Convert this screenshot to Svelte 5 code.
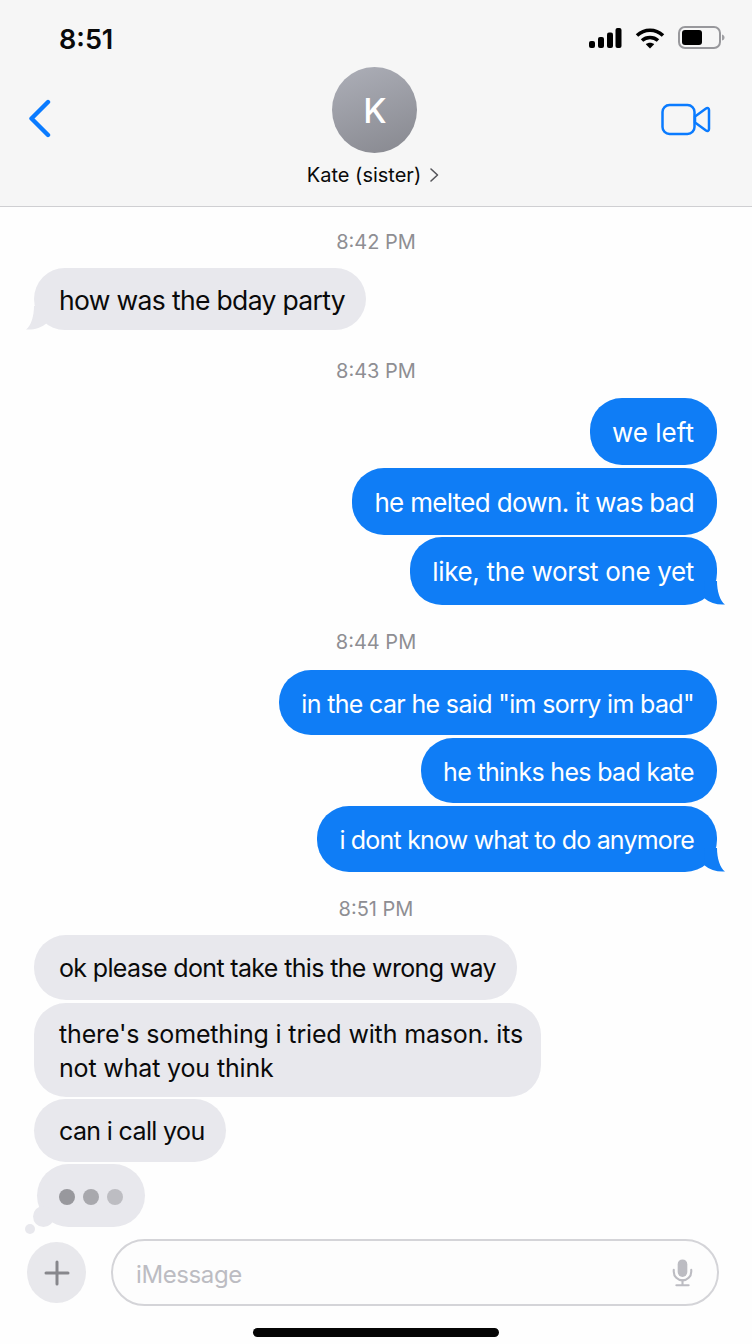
<script>
  const items = [
    { t: 'time', text: '8:42 PM', gap: 23 },
    { t: 'in', text: 'how was the bday party', gap: 14, h: 62, tail: true, size: 26.5, ls: -0.66 },
    { t: 'time', text: '8:43 PM', gap: 29 },
    { t: 'out', text: 'we left', gap: 15, h: 67, size: 26, ls: 0 },
    { t: 'out', text: 'he melted down. it was bad', gap: 3, h: 67, size: 26, ls: -0.68 },
    { t: 'out', text: 'like, the worst one yet', gap: 2, h: 68, tail: true, size: 26, ls: -0.34 },
    { t: 'time', text: '8:44 PM', gap: 25 },
    { t: 'out', text: 'in the car he said "im sorry im bad"', gap: 16, h: 65, size: 25, ls: -0.66 },
    { t: 'out', text: 'he thinks hes bad kate', gap: 3, h: 65, size: 25, ls: -0.68 },
    { t: 'out', text: 'i dont know what to do anymore', gap: 3, h: 66, tail: true, size: 25, ls: -0.8 },
    { t: 'time', text: '8:51 PM', gap: 25 },
    { t: 'in', text: 'ok please dont take this the wrong way', gap: 14, h: 65, size: 25, ls: -0.65 },
    { t: 'in', text: "there's something i tried with mason. its\nnot what you think", gap: 3, h: 94, size: 25, ls: -0.15, tight: true },
    { t: 'in', text: 'can i call you', gap: 2, h: 63, size: 25, ls: -0.64 }
  ];
</script>

<div class="phone">
  <header class="top">
    <div class="status">
      <span class="clock">8:51</span>
      <div class="status-icons">
        <svg width="33" height="22" viewBox="0 0 33 22" fill="#000">
          <rect x="0" y="14" width="6" height="7" rx="2" />
          <rect x="9" y="10" width="6" height="11" rx="2" />
          <rect x="18" y="5.500" width="6" height="15.500" rx="2" />
          <rect x="26.500" y="1" width="6" height="20" rx="2" />
        </svg>
        <svg width="30" height="22" viewBox="0 0 30 22" fill="none" stroke="#000" stroke-width="3.600">
          <path d="M2 8.500C9.500 1.500 20.500 1.500 28 8.500" />
          <path d="M7 13.500C11.500 9.500 18.500 9.500 23 13.500" />
          <path d="M15 21.500L10.800 17.300C13 15.300 17 15.300 19.200 17.300Z" fill="#000" stroke="none" />
        </svg>
        <svg width="47" height="23" viewBox="0 0 47 23">
          <rect x="1" y="1" width="41" height="21" rx="6" fill="none" stroke="#98989c" stroke-width="2" />
          <rect x="4" y="4" width="20" height="15" rx="3" fill="#000" />
          <path d="M44 8.500C45.800 9 46.500 10 46.500 11.500C46.500 13 45.800 14 44 14.500Z" fill="#a0a0a4" />
        </svg>
      </div>
    </div>
    <div class="nav">
      <svg class="back" width="24" height="40" viewBox="0 0 24 40" fill="none" stroke="#0a7bff" stroke-width="4.400" stroke-linecap="round" stroke-linejoin="round">
        <path d="M20 3L3.500 19.500L20 36" />
      </svg>
      <div class="contact">
        <div class="avatar">K</div>
        <div class="name">Kate (sister)
          <svg width="10" height="16" viewBox="0 0 10 16" fill="none" stroke="#55555a" stroke-width="1.600" stroke-linecap="round" stroke-linejoin="round">
            <path d="M2 2L8.500 8L2 14" />
          </svg>
        </div>
      </div>
      <svg class="video" width="50" height="33" viewBox="0 0 50 33" fill="none" stroke="#0a7bff" stroke-width="2.500" stroke-linejoin="round">
        <rect x="1.500" y="2" width="32" height="29" rx="7" />
        <path d="M34 13.500L45 5.500C46.500 4.500 48 5.200 48 7V26C48 27.800 46.500 28.500 45 27.500L34 19.500Z" />
      </svg>
    </div>
  </header>

  <main class="thread">
    {#each items as m}
      {#if m.t === 'time'}
        <div class="stamp" style:margin-top="{m.gap}px">{m.text}</div>
      {:else}
        <div class="bubble {m.t}" class:tight={m.tight} style:margin-top="{m.gap}px" style:min-height="{m.h}px" style:font-size="{m.size}px" style:letter-spacing="{m.ls}px">
          <span class="txt">{m.text}</span>
          {#if m.tail && m.t === 'out'}
            <svg class="tail tail-out" width="24" height="24" viewBox="0 0 24 24"><path d="M4 0H16C16 10 19 20 24 23.500C16 24 9 22 3 17Z" fill="#0f7df6" /></svg>
          {/if}
          {#if m.tail && m.t === 'in'}
            <svg class="tail tail-in" width="24" height="24" viewBox="0 0 24 24"><path d="M20 0H8C8 10 5 20 0 23.500C8 24 15 22 21 17Z" fill="#e8e8ed" /></svg>
          {/if}
        </div>
      {/if}
    {/each}
    <div class="typing">
      <span class="dot d1"></span><span class="dot d2"></span><span class="dot d3"></span>
      <span class="puff big"></span><span class="puff small"></span>
    </div>
  </main>

  <footer class="composer">
    <div class="plus">
      <svg width="26" height="26" viewBox="0 0 26 26" stroke="#87878c" stroke-width="3" stroke-linecap="round">
        <path d="M13 2V24M2 13H24" />
      </svg>
    </div>
    <div class="field">
      <span class="placeholder">iMessage</span>
      <svg width="21" height="29" viewBox="0 0 24 32" fill="none" stroke="#bcbcc2" stroke-width="2.400" stroke-linecap="round">
        <rect x="6.500" y="1" width="11" height="20" rx="5.500" fill="#bcbcc2" stroke="none" />
        <path d="M2 13V15C2 20.500 6.500 25 12 25C17.500 25 22 20.500 22 15V13" />
        <path d="M12 25V30M5 30.500H19" />
      </svg>
    </div>
  </footer>
  <div class="home"><span class="bar"></span></div>
</div>

<style>
  :global(body) {
    margin: 0;
    background: #fefefe;
  }
  .phone {
    width: 752px;
    height: 1344px;
    display: flex;
    flex-direction: column;
    overflow: hidden;
    background: #fefefe;
    font-family: Inter, "Liberation Sans", sans-serif;
    color: #0a0a0a;
  }
  .top {
    height: 206px;
    flex: none;
    background: #f6f6f6;
    border-bottom: 1px solid #cfcfd2;
    display: flex;
    flex-direction: column;
  }
  .status {
    display: flex;
    justify-content: space-between;
    align-items: center;
    padding: 21px 27px 0 59px;
    height: 33px;
  }
  .clock {
    font-size: 27px;
    font-weight: 600;
    line-height: 33px;
    padding-top: 3px;
  }
  .status-icons {
    display: flex;
    align-items: center;
    gap: 13px;
  }
  .nav {
    flex: 1;
    display: grid;
    grid-template-columns: 1fr auto 1fr;
    align-items: start;
    padding: 13px 41px 0 39px;
  }
  .back {
    margin-top: 32px;
    margin-left: -11px;
  }
  .video {
    margin-top: 36px;
    justify-self: end;
  }
  .contact {
    display: flex;
    flex-direction: column;
    align-items: center;
  }
  .avatar {
    width: 85px;
    height: 86px;
    border-radius: 50%;
    background: linear-gradient(160deg, #adafb8, #87888f);
    color: #fff;
    font-size: 34px;
    font-weight: 500;
    display: flex;
    align-items: center;
    justify-content: center;
  }
  .name {
    margin-top: 9px;
    font-size: 20px;
    line-height: 26px;
    display: flex;
    align-items: center;
    gap: 8px;
    margin-left: -4px;
  }
  .thread {
    flex: 1;
    display: flex;
    flex-direction: column;
    align-items: flex-start;
    padding: 0 35px 0 34px;
  }
  .stamp {
    align-self: center;
    margin-left: 1px;
    font-size: 20px;
    line-height: 24px;
    color: #8e8e93;
  }
  .bubble {
    position: relative;
    box-sizing: border-box;
    display: flex;
    align-items: center;
    border-radius: 32px;
    line-height: 34px;
  }
  .txt {
    white-space: pre-line;
  }
  .in {
    background: #e8e8ed;
    color: #0a0a0a;
    padding: 1px 21px 0 25px;
  }
  .tight {
    padding-right: 18px;
  }
  .out {
    align-self: flex-end;
    background: #0f7df6;
    color: #fff;
    padding: 2px 23px 0 22px;
  }
  .tail {
    position: absolute;
    bottom: 0;
  }
  .tail-out {
    right: -8px;
  }
  .tail-in {
    left: -8px;
  }
  .typing {
    position: relative;
    margin-top: 2px;
    margin-left: 3px;
    box-sizing: border-box;
    width: 108px;
    height: 63px;
    padding: 2px 0 0 22px;
    border-radius: 32px;
    background: #e8e8ed;
    display: flex;
    align-items: center;
    gap: 8px;
  }
  .dot {
    width: 16px;
    height: 16px;
    border-radius: 50%;
  }
  .d1 { background: #98989d; }
  .d2 { background: #a8a8ad; }
  .d3 { background: #bdbdc2; }
  .puff {
    position: absolute;
    border-radius: 50%;
    background: #e8e8ed;
  }
  .big {
    width: 21px;
    height: 21px;
    left: -4px;
    bottom: 0;
  }
  .small {
    width: 10px;
    height: 10px;
    left: -12px;
    bottom: -7px;
  }
  .composer {
    flex: none;
    display: flex;
    align-items: center;
    gap: 25px;
    padding: 0 33px 0 27px;
    height: 67px;
  }
  .plus {
    width: 59px;
    height: 61px;
    flex: none;
    border-radius: 50%;
    background: #e8e8ec;
    display: flex;
    align-items: center;
    justify-content: center;
  }
  .field {
    flex: 1;
    box-sizing: border-box;
    height: 67px;
    border: 2px solid #d4d4d8;
    border-radius: 34px;
    background: #fdfdfd;
    display: flex;
    align-items: center;
    justify-content: space-between;
    padding: 0 24px 0 23px;
  }
  .placeholder {
    font-size: 24px;
    letter-spacing: -0.4px;
    color: #bcbcc2;
    padding-top: 3px;
  }
  .home {
    flex: none;
    height: 16px;
    display: flex;
    justify-content: center;
    align-items: flex-start;
    padding-top: 22px;
  }
  .bar {
    width: 246px;
    height: 9px;
    border-radius: 5px;
    background: #050505;
  }
</style>
